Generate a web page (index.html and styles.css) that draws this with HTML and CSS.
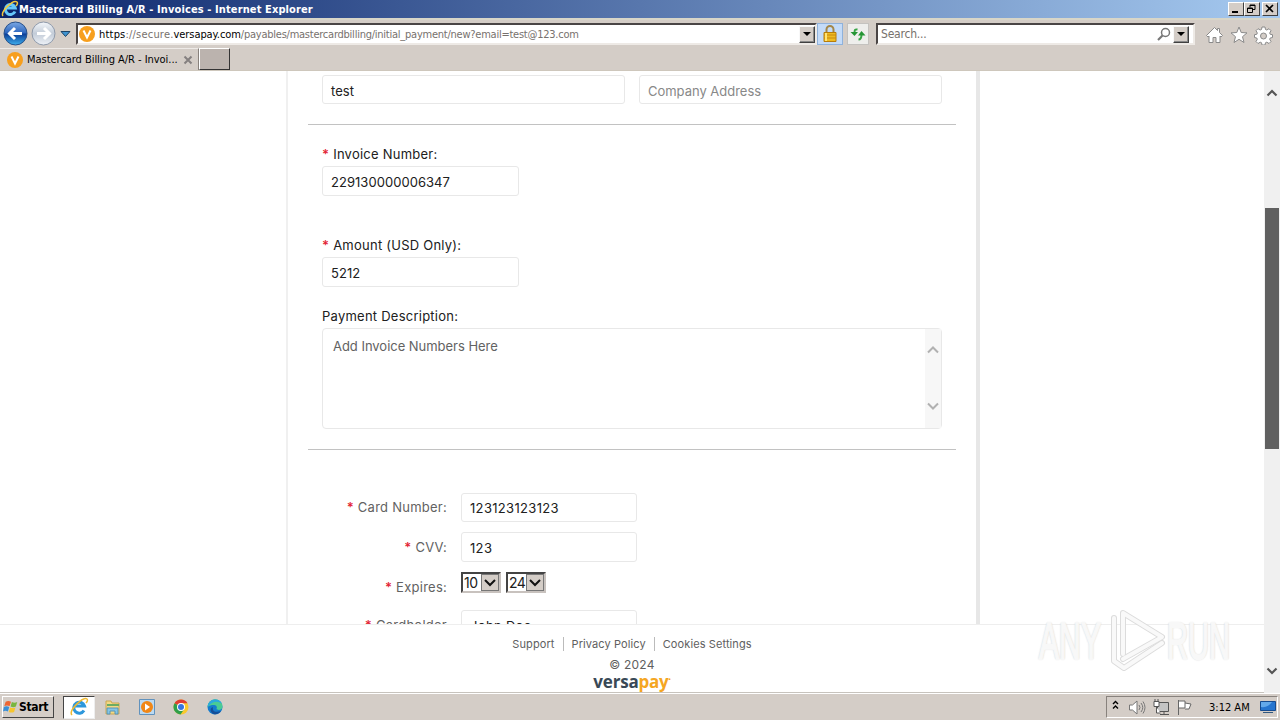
FILE: index.html
```html
<!DOCTYPE html>
<html lang="en">
  <head>
    <meta charset="UTF-8" />
    <title>Mastercard Billing A/R - Invoices</title>
    <link rel="stylesheet" href="styles.css" />
  </head>
  <body>
    <!-- Window title -->
    <header class="titlebar">
      <svg class="title-icon" viewBox="0 0 18 18" width="18" height="18">
        <path d="M14 11.5A5 5 0 1 1 14.2 8H5" fill="none" stroke="#65c8fa" stroke-width="3" />
        <path d="M2 16C-1 12 12-1 16 2c1 1 0 3-1 4" fill="none" stroke="#f3c83c" stroke-width="1.5" />
      </svg>
      <span class="title-text">Mastercard Billing A/R - Invoices - Internet Explorer</span>
      <div class="window-buttons">
        <button class="win-btn"><svg width="12" height="10"><path d="M2 8h6" stroke="#000" stroke-width="2" /></svg></button>
        <button class="win-btn"><svg width="12" height="10"><path d="M4 3.5V1h5v4.5H7M4 1.5h5M1.5 4h5v4.5h-5zM1 4.5h6" fill="none" stroke="#000" /></svg></button>
        <button class="win-btn close"><svg width="12" height="10"><path d="M2 1l7 7M9 1L2 8" stroke="#000" stroke-width="1.7" /></svg></button>
      </div>
    </header>

    <!-- Address bar -->
    <div class="toolbar">
      <svg class="nav-buttons" width="76" height="30" viewBox="0 0 76 30">
        <defs>
          <linearGradient id="back" x2="0" y2="1">
            <stop offset="0" stop-color="#7ba8e4" />
            <stop offset=".48" stop-color="#2c65bd" />
            <stop offset=".52" stop-color="#0b3d96" />
            <stop offset="1" stop-color="#3eb0ee" />
          </linearGradient>
          <linearGradient id="fwd" x2="0" y2="1">
            <stop offset="0" stop-color="#f4f7fb" />
            <stop offset=".5" stop-color="#c3ccd8" />
            <stop offset="1" stop-color="#eef2f7" />
          </linearGradient>
        </defs>
        <circle cx="15.5" cy="14.5" r="11.5" fill="url(#back)" stroke="#285089" />
        <path d="M22 14.5H10M15 9l-5.500 5.500L15 20" fill="none" stroke="#fff" stroke-width="3" />
        <circle cx="43.500" cy="14.500" r="11.500" fill="url(#fwd)" stroke="#8e99aa" />
        <path d="M37 14.500h12M44 9l5.500 5.500L44 20" fill="none" stroke="#fff" stroke-width="3" />
        <path d="M61 12.500h9l-4.500 5z" fill="#3f93cf" stroke="#1d4467" />
      </svg>
      <div class="address">
        <span class="favicon"><svg width="16" height="16"><path d="M4.500 4.500L8 11.500l3.500-7" fill="none" stroke="#fff" stroke-width="2" /></svg></span>
        <span class="url"><span class="host"><b>https</b>://secure.</span><b>versapay.com</b><span class="path">/payables/mastercardbilling/initial_payment/new?email=test@123.com</span></span>
        <button class="drop"><svg width="8" height="4"><path d="M0 0h8L4 4z" /></svg></button>
      </div>
      <button class="lock">
        <svg width="16" height="18" viewBox="0 0 16 18">
          <path d="M4.500 8V4.500a3.500 3.500 0 0 1 7 0V8" fill="none" stroke="#a48749" stroke-width="2" />
          <path d="M2 7.500h12v9H2z" fill="#eebb22" stroke="#b77c0b" />
          <path d="M2 10h12M2 13h12" stroke="#c9890e" />
          <path d="M4 8v8" stroke="#ffe477" stroke-width="2" />
        </svg>
      </button>
      <button class="refresh">
        <svg width="16" height="16" viewBox="0 0 16 16">
          <path d="M7.500 3.500C5 3 4.500 4 4.500 7M8.500 13.500c2.500 0 3-1.500 3-5" fill="none" stroke="#36a544" stroke-width="2" />
          <path d="M0.500 6h7.500L4.500 10zM8 9.500h7.500L11.500 5z" fill="#259535" />
        </svg>
      </button>
      <div class="search">
        <span>Search...</span>
        <svg class="magnifier" width="15" height="15"><path d="M1 13l5-5" stroke="#777" stroke-width="2.200" /><circle cx="8.500" cy="5.500" r="4" fill="#fff" stroke="#777" stroke-width="1.500" /></svg>
        <button class="drop"><svg width="8" height="4"><path d="M0 0h8L4 4z" /></svg></button>
      </div>
      <svg class="tools" width="68" height="20" viewBox="0 0 68 20" fill="#fff" stroke="#8a8a8a">
        <path d="M1.500 10.500L9.500 2.500l3 3V3.500h2v4l3 3-1.500 1.500-1-1V17.500h-4v-5h-3v5h-4V11l-1 1z" />
        <path d="M34 2l2.200 5.500 5.800.4-4.500 3.800 1.500 5.800-5-3.200-5 3.200 1.500-5.800L26 7.900l5.800-.4z" />
        <path d="M57 2h3l.5 2.500 1.300.5 2.200-1.300 2 2L64.700 8l.5 1.300 2.300.4v2.800l-2.300.5-.5 1.300L66 16.500l-2 2-2.200-1.300-1.300.5L60 20h-3l-.5-2.300-1.300-.5L53 18.500l-2-2 1.300-2.200-.5-1.300-2.300-.5V9.700l2.300-.4.500-1.300L51 5.700l2-2L55.200 5l1.300-.5z" />
        <circle cx="58.500" cy="11" r="3" fill="#d4cdc7" />
      </svg>
    </div>

    <!-- Tabs -->
    <div class="tabs">
      <div class="tab">
        <span class="favicon"><svg width="16" height="16"><path d="M4.500 4.500L8 11.500l3.500-7" fill="none" stroke="#fff" stroke-width="2" /></svg></span>
        <span class="tab-text">Mastercard Billing A/R - Invoi...</span>
        <svg width="10" height="10"><path d="M1.500 1.500l7 7M8.500 1.500l-7 7" stroke="#858080" stroke-width="2" /></svg>
      </div>
      <div class="new-tab"></div>
    </div>

    <div class="viewport">
      <div class="page">
        <main class="card">
          <div class="row two">
            <div class="input">test</div>
            <div class="input placeholder">Company Address</div>
          </div>
          <hr />
          <div class="field invoice">
            <label><i>*</i> Invoice Number:</label>
            <div class="input">229130000006347</div>
          </div>
          <div class="field amount">
            <label><i>*</i> Amount (USD Only):</label>
            <div class="input">5212</div>
          </div>
          <div class="field description">
            <label>Payment Description:</label>
            <div class="textarea">
              <span>Add Invoice Numbers Here</span>
              <div class="textarea-scroll">
                <svg width="12" height="8"><path d="M1 6.500l5-5 5 5" /></svg>
                <svg width="12" height="8"><path d="M1 1.500l5 5 5-5" /></svg>
              </div>
            </div>
          </div>
          <hr />
          <div class="payment">
            <label class="first"><i>*</i> Card Number:</label>
            <div class="input">123123123123</div>
            <label><i>*</i> CVV:</label>
            <div class="input">123</div>
            <label><i>*</i> Expires:</label>
            <div class="expiry">
              <div class="select"><span>10</span><b><svg width="12" height="8"><path d="M1 1l5 5 5-5" /></svg></b></div>
              <div class="select"><span>24</span><b><svg width="12" height="8"><path d="M1 1l5 5 5-5" /></svg></b></div>
            </div>
            <label><i>*</i> Cardholder</label>
            <div class="input">John Doe</div>
          </div>
        </main>
        <footer class="footer">
          <nav><span>Support</span><span>Privacy Policy</span><span>Cookies Settings</span></nav>
          <div class="copyright">© 2024</div>
          <div class="brand">versa<span>pay</span><sup>•</sup></div>
        </footer>
      </div>
      <div class="scrollbar">
        <svg class="up" width="12" height="9"><path d="M1.500 7.500L6 3l4.500 4.500" /></svg>
        <div class="thumb"></div>
        <svg class="down" width="12" height="9"><path d="M1.500 1.500L6 6l4.500-4.500" /></svg>
      </div>

      <!-- Floating recorder mark -->
      <div class="watermark">
        <span class="any">ANY</span>
        <svg width="62" height="66" viewBox="0 0 62 66" fill="none" stroke-linejoin="round" stroke-linecap="round">
          <g stroke="#dcdcdc" stroke-width="6">
            <path d="M9 10v43l10 7L57 35" />
            <path d="M18 46V5L57 29L18 51" />
          </g>
          <g stroke="#f9f9f9" stroke-width="4">
            <path d="M9 10v43l10 7L57 35" />
            <path d="M18 46V5L57 29L18 51" />
          </g>
        </svg>
        <span class="run">RUN</span>
      </div>
    </div>

    <!-- Taskbar -->
    <div class="taskbar">
      <button class="start">
        <svg width="16" height="16" viewBox="0 0 18 18">
          <path d="M3 3c2-1 4-1 6 0L7.500 8c-2-1-4-1-6 0z" fill="#ed6532" />
          <path d="M10 3.500c2 1 4 1 6 0L14.500 8.500c-2 1-4 1-6 0z" fill="#79b63e" />
          <path d="M1 9c2-1 4-1 6 0l-1.500 5c-2-1-4-1-5.500 0z" fill="#3a8fd6" />
          <path d="M8 9.500c2 1 4 1 6 0L12.500 14.500c-2 1-4 1-6 0z" fill="#f6c52e" />
        </svg>
        <span>Start</span>
      </button>
      <div class="task active">
        <svg width="20" height="20" viewBox="0 0 20 20">
          <path d="M15 13.500A5.500 5.500 0 1 1 15.500 9H6" fill="none" stroke="#2d97db" stroke-width="3" />
          <path d="M3 18C-1 14 14-1 18 2c1 1 0 3-1 4" fill="none" stroke="#eeb931" stroke-width="1.500" />
        </svg>
      </div>
      <div class="task">
        <svg width="18" height="18" viewBox="0 0 18 18">
          <path d="M2 3h5l1 2h7v11H2z" fill="#f2d983" stroke="#cba651" />
          <path d="M3 7h12" stroke="#6bac63" stroke-width="2" />
          <path d="M3 16v-6h11v6h-3v-3H6v3z" fill="#83c5e5" stroke="#5694b8" />
        </svg>
      </div>
      <div class="task">
        <svg width="18" height="18" viewBox="0 0 18 18">
          <path d="M1.500 1.500h15v15h-15z" fill="#bcdaf2" stroke="#6192bd" />
          <circle cx="9" cy="9" r="6" fill="#f18717" />
          <path d="M7 5.500v7l5-3.500z" fill="#fff" />
        </svg>
      </div>
      <div class="task">
        <svg width="18" height="18" viewBox="0 0 18 18">
          <circle cx="9" cy="9" r="7.500" fill="#f9c92d" />
          <path d="M9 9L2.500 5.200A7.500 7.500 0 0 1 15.500 5.200H9z" fill="#df3d32" />
          <path d="M9 9L2.500 5.200A7.500 7.500 0 0 0 8.500 16.500L12.300 11z" fill="#2f9f4b" />
          <circle cx="9" cy="9" r="4" fill="#fff" />
          <circle cx="9" cy="9" r="3" fill="#3675df" />
        </svg>
      </div>
      <div class="task">
        <svg width="18" height="18" viewBox="0 0 18 18">
          <circle cx="9" cy="9" r="7.500" fill="#147bcd" />
          <path d="M1.500 9A7.500 7.500 0 0 1 16.500 8.500c0 4-5 4-6 2.500 2-4-4-5.500-9-2z" fill="#4acb94" />
          <path d="M1.500 9A7.500 7.500 0 0 1 9 1.500c4 0 6 2 7 4-5-3-10-2-14.500 3.500z" fill="#2ba8df" />
          <path d="M7 9c-1 4 2 6 8 4-3 4-7 4-9 2S4 10 7 9z" fill="#154e98" />
        </svg>
      </div>
      <div class="tray">
        <svg width="82" height="20" viewBox="0 0 82 20" fill="none">
          <path d="M2 7l2.500-2.500L7 7M2 11.500L4.500 9 7 11.500" stroke="#000" stroke-width="1.400" />
          <path d="M18.500 8h3l4.500-4v13l-4.500-4h-3z" fill="#fff" stroke="#777" />
          <path d="M28 8q2 2.500 0 5M30 6q3.500 4.500 0 9M32 4.500q4 6 0 12" stroke="#777" />
          <path d="M46.500 5.500h11v9h-11zM49 17.500h9M53 15v2" fill="#c4c4c4" stroke="#555" />
          <path d="M43 4.500h5v5h-5zM44 2v2M47 2v2M45.500 10v6h4" fill="#fff" stroke="#555" />
          <path d="M67.500 18V3M68 4h6v7h-6M74 6l6 1-2 5h-4" fill="#fff" stroke="#666" />
        </svg>
        <span>3:12 AM</span>
        <svg width="16" height="14"><path d="M.5 1.500h15v9H.500z" fill="#2675cf" stroke="#164b8f" /><path d="M1 7q7 1 11-5H1z" fill="#63a9eb" /><path d="M3 12.500h10" stroke="#32577e" /></svg>
      </div>
    </div>
  </body>
</html>
```
FILE: styles.css
```css
* {
  box-sizing: border-box;
}
body {
  margin: 0;
  width: 1280px;
  height: 720px;
  overflow: hidden;
  display: flex;
  flex-direction: column;
  background: #d4cdc7;
  font-family: "DejaVu Sans Condensed", "DejaVu Sans", sans-serif;
  font-stretch: condensed;
  font-size: 11px;
}
svg {
  display: block;
  flex: none;
}
button {
  padding: 0;
  font: inherit;
  flex: none;
  display: flex;
  align-items: center;
  justify-content: center;
}
b,
i {
  font-weight: inherit;
  font-style: normal;
}

/* Browser chrome */
.titlebar {
  height: 18px;
  flex: none;
  display: flex;
  align-items: center;
  padding: 0 2px 0 1px;
  color: #fff;
  background: linear-gradient(90deg, #0a246a, #a6caf0);
}
.title-text {
  font-weight: bold;
  white-space: nowrap;
  letter-spacing: 0.11px;
}
.window-buttons {
  margin-left: auto;
  display: flex;
}
.win-btn {
  width: 16px;
  height: 14px;
  border: 1px solid;
  border-color: #fff #404040 #404040 #fff;
  background: #d4cdc7;
}
.win-btn.close {
  margin-left: 2px;
}
.toolbar {
  height: 30px;
  flex: none;
  display: flex;
  align-items: center;
  border-top: 2px solid #d8d6c8;
}
.address,
.search {
  height: 22px;
  display: flex;
  align-items: center;
  background: #fff;
  border: 2px solid;
  border-color: #4a4545 #eeeae6 #eeeae6 #4a4545;
  color: #77716d;
}
.address {
  width: 741px;
}
.address .favicon {
  margin-left: 1px;
}
.favicon {
  width: 16px;
  height: 16px;
  flex: none;
  border-radius: 50%;
  background: #f79f1e;
}
.url {
  margin-left: 4px;
  white-space: nowrap;
  letter-spacing: -0.07px;
}
.url b {
  color: #000;
}
.host {
  letter-spacing: 0.2px;
}
.path {
  letter-spacing: -0.24px;
}
.drop {
  width: 16px;
  height: 17px;
  background: #d4cdc7;
  border: 1px solid;
  border-color: #f8f8f8 #404040 #404040 #f8f8f8;
  box-shadow: inset -1px -1px #888;
  margin-left: auto;
}
.lock,
.refresh {
  height: 22px;
  border: 1px solid #8fb2dc;
  background: #c4dbf8;
}
.lock {
  width: 26px;
}
.refresh {
  width: 22px;
  margin-left: 4px;
  border-color: #c4c2bf;
  background: #eeeeec;
}
.search {
  width: 319px;
  margin-left: 7px;
  padding: 0 4px 0 3px;
  font-size: 12px;
  letter-spacing: -0.2px;
}
.magnifier {
  margin-left: auto;
}
.search .drop {
  margin-left: 1px;
}
.tools {
  margin-left: 10px;
  margin-top: 2px;
}
.tabs {
  height: 23px;
  flex: none;
  display: flex;
  border-bottom: 1px solid #cec7bc;
}
.tab {
  width: 199px;
  display: flex;
  align-items: center;
  padding-left: 7px;
  border-top: 1px solid #eeeae7;
  border-right: 1px solid #88817c;
}
.tab-text {
  width: 160px;
  padding-left: 4px;
  white-space: nowrap;
  letter-spacing: -0.04px;
}
.new-tab {
  width: 31px;
  height: 22px;
  background: #bbb3ae;
  border: 1px solid;
  border-color: #fff #333 #333 #fff;
}

/* Page */
.viewport {
  position: relative;
  height: 622px;
  flex: none;
  display: flex;
  overflow: hidden;
  background: #fff;
  font-family: Inter, sans-serif;
  font-stretch: normal;
  font-size: 13px;
  color: #202020;
}
.page {
  width: 1264px;
  height: 622px;
}
.card {
  width: 694px;
  height: 553px;
  margin-left: 286px;
  padding: 4px 20px 0;
  overflow: hidden;
  border-left: 2px solid #f0f0f0;
  border-right: 4px solid #e7e7e7;
}
.row.two {
  display: grid;
  grid-template-columns: 303px 303px;
  gap: 14px;
  padding-left: 14px;
}
.input {
  height: 30px;
  border: 1px solid #e8e8e8;
  border-radius: 3px;
  padding: 1px 8px 0;
  line-height: 28px;
  letter-spacing: 0.04px;
}
.two .input {
  height: 29px;
}
.input.placeholder {
  color: #888;
  letter-spacing: -0.02px;
}
hr {
  width: 648px;
  height: 1px;
  border: none;
  margin: 20px 0 0;
  background: #c2c2c2;
}
.field {
  padding-left: 14px;
}
.field label {
  display: block;
  height: 20px;
  line-height: 16px;
  letter-spacing: 0.24px;
}
.field .input {
  width: 197px;
}
label i {
  color: #e32636;
  font-weight: 600;
}
.invoice {
  padding-top: 21px;
}
.amount {
  padding-top: 41px;
}
.description {
  padding-top: 21px;
}
.textarea {
  width: 620px;
  height: 101px;
  display: flex;
  justify-content: space-between;
  border: 1px solid #e8e8e8;
  border-radius: 4px;
  color: #626262;
}
.textarea > span {
  padding: 8px 10px;
  line-height: 18px;
  letter-spacing: -0.03px;
}
.textarea-scroll {
  width: 16px;
  background: #f7f7f7;
  display: flex;
  flex-direction: column;
  align-items: center;
  justify-content: space-between;
  padding: 17px 0 18px;
}
.textarea-scroll path {
  fill: none;
  stroke: #b1b1b1;
  stroke-width: 2;
}
.payment {
  display: grid;
  grid-template-columns: 139px 176px;
  grid-template-rows: 29px 30px 28px 30px;
  column-gap: 14px;
  row-gap: 10px;
  padding-top: 43px;
}
.payment label {
  text-align: right;
  line-height: 31px;
  color: #626262;
  letter-spacing: 0.25px;
}
.payment .first {
  line-height: 29px;
}
.payment .input {
  height: 100%;
  letter-spacing: 0.33px;
}
.payment .first + .input {
  padding-top: 0;
}
.expiry {
  display: flex;
  gap: 5px;
}
.select {
  width: 40px;
  height: 21px;
  display: flex;
  border: 2px solid;
  border-color: #444 #c8c2be #c8c2be #444;
  font-size: 14px;
  line-height: 17px;
  letter-spacing: -0.5px;
}
.select span {
  width: 18px;
  padding-left: 1px;
}
.select b {
  width: 18px;
  height: 17px;
  display: flex;
  align-items: center;
  justify-content: center;
  background: #d4cdc7;
  border: 1px solid #777;
}
.select path {
  fill: none;
  stroke: #111;
  stroke-width: 2;
}
.footer {
  width: 1264px;
  height: 69px;
  padding-top: 12px;
  background: #fff;
  border-top: 1px solid #eee;
  border-bottom: 1px solid #c7c3bd;
  color: #606060;
  text-align: center;
}
.footer nav {
  display: flex;
  justify-content: center;
  font-size: 11px;
  line-height: 14px;
  letter-spacing: 0.1px;
}
.footer nav span {
  padding: 0 8px;
}
.footer nav span + span {
  border-left: 1px solid #bbb;
}
.copyright {
  margin-top: 5px;
  font-size: 12px;
  line-height: 17px;
  letter-spacing: 0.2px;
}
.brand {
  font: bold 17px/17px "Open Sans", sans-serif;
  letter-spacing: -0.2px;
  color: #394956;
}
.brand span,
.brand sup {
  color: #f5a623;
}
.brand sup {
  font-size: 6px;
  line-height: 0;
}
.scrollbar {
  width: 16px;
  background: #f0f0f0;
  display: flex;
  flex-direction: column;
  padding: 17px 2px 17px;
}
.scrollbar path {
  fill: none;
  stroke: #555;
  stroke-width: 2.2;
}
.thumb {
  width: 14px;
  height: 241px;
  margin: 111px 0 0 -1px;
  background: #606060;
}
.down {
  margin-top: auto;
}

.watermark {
  position: absolute;
  left: 1039px;
  top: 537px;
  display: flex;
  align-items: center;
  color: #f8f8f8;
  font: 52px/66px "Liberation Sans", sans-serif;
  -webkit-text-stroke: 2px #f8f8f8;
  text-shadow: 0 0 2px #bcbcbc, 0 0 3px #d8d8d8;
}
.watermark span {
  transform-origin: 0 0;
}
.watermark .any {
  width: 66px;
  transform: scaleX(0.58);
}
.watermark .run {
  width: 64px;
  transform: scaleX(0.56);
}

/* Taskbar */
.taskbar {
  height: 27px;
  flex: none;
  display: flex;
  align-items: center;
  padding: 0 2px;
  border-top: 1px solid #fff;
}
.start {
  width: 52px;
  height: 22px;
  justify-content: flex-start;
  background: #d4cdc7;
  border: 1px solid;
  border-color: #fff #444 #444 #fff;
  font-weight: bold;
  font-size: 12px;
  letter-spacing: -0.3px;
  margin-right: 9px;
}
.task {
  width: 34px;
  height: 23px;
  display: flex;
  align-items: center;
  justify-content: center;
}
.task.active {
  width: 32px;
  margin-right: 1px;
  background: #fff;
  border: 1px solid;
  border-color: #444 #eee #eee #444;
}
.tray {
  width: 172px;
  height: 22px;
  display: flex;
  align-items: center;
  margin-left: auto;
  padding-left: 4px;
  border: 1px solid;
  border-color: #88827d #fff #fff #88827d;
}
.tray span {
  width: 51px;
  margin-left: 16px;
  white-space: nowrap;
}
```
